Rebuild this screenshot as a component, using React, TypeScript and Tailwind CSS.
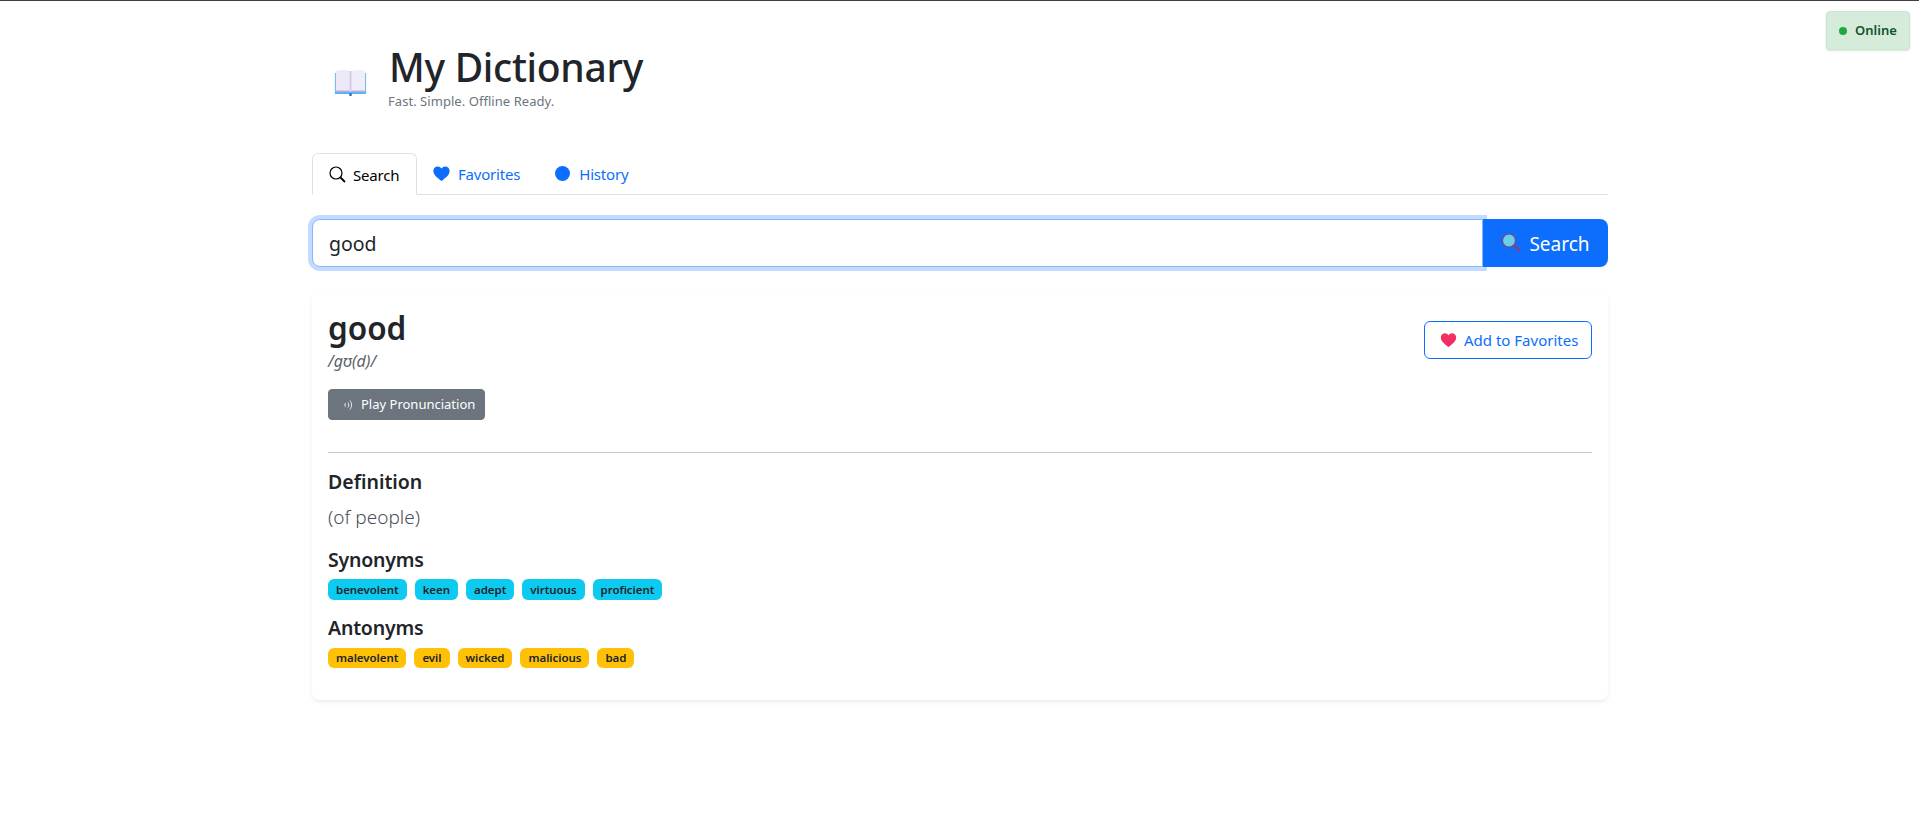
const font = { fontFamily: '"Noto Sans", sans-serif' }

function BookIcon() {
  return (
    <svg width="33" height="36" viewBox="0 0 36 36" preserveAspectRatio="none" aria-hidden="true">
      <path d="M1 8h34v21H20l-1 2h-2l-1-2H1z" fill="#5fb3ee" />
      <path d="M2 6c5-1.500 11-1.500 15.500 0v21C13 25.500 7 25.500 2 27z" fill="#ece8f8" />
      <path d="M18.500 6c4.500-1.500 10.500-1.500 15.500 0v21c-5-1.500-11-1.500-15.500 0z" fill="#f0edfb" />
      <rect x="17" y="6" width="2" height="21" fill="#cfc8e6" />
      <path d="M2 25.500h14l2 1.500 2-1.500h14V27H2z" fill="#b8b0d4" />
      <rect x="17" y="28" width="2" height="3" fill="#2f6fc4" />
    </svg>
  )
}

function MagnifierEmoji() {
  return (
    <svg width="20" height="20" viewBox="0 0 20 20" aria-hidden="true">
      <path d="M12.500 13l1.800-1.600 4.500 5a1.500 1.500 0 0 1-2.100 1.800z" fill="#8d3f78" />
      <circle cx="8" cy="7.500" r="6.600" fill="#6ad0e8" stroke="#6a4f96" strokeWidth="1.400" />
    </svg>
  )
}

function HeartIcon({ color, width, height }: { color: string; width: number; height: number }) {
  return (
    <svg width={width} height={height} viewBox="0 0 24 21" aria-hidden="true">
      <path
        d="M12 21C5 15.500 0.500 12 0.500 6.800 0.500 3 3.300 0.500 6.600 0.500c2.300 0 4.200 1 5.400 3 1.200-2 3.100-3 5.400-3 3.300 0 6.100 2.500 6.100 6.300C23.500 12 19 15.500 12 21z"
        fill={color}
      />
    </svg>
  )
}

function RedHeart() {
  return (
    <svg width="17" height="14" viewBox="0 0 24 21" aria-hidden="true">
      <defs>
        <linearGradient id="redHeartFill" x1="0" y1="0" x2="0" y2="1">
          <stop offset="0" stopColor="#f4345c" />
          <stop offset="1" stopColor="#f0266e" />
        </linearGradient>
      </defs>
      <path
        d="M12 21C5 15.500 0.500 12 0.500 6.800 0.500 3 3.300 0.500 6.600 0.500c2.300 0 4.200 1 5.400 3 1.200-2 3.100-3 5.400-3 3.300 0 6.100 2.500 6.100 6.300C23.500 12 19 15.500 12 21z"
        fill="url(#redHeartFill)"
      />
    </svg>
  )
}

function SearchGlyph() {
  return (
    <svg width="17" height="17" viewBox="0 0 17 17" fill="none" stroke="#000" aria-hidden="true">
      <circle cx="7" cy="7" r="6" strokeWidth="1.200" />
      <path d="M11.500 11.500l4.500 4.500" strokeWidth="1.800" />
    </svg>
  )
}

function SpeakerGlyph() {
  return (
    <svg width="12" height="14" viewBox="0 0 12 14" fill="none" stroke="#e8eaec" aria-hidden="true">
      <path d="M2 6l2-1.500v5L2 8z" fill="#aeb3b8" stroke="none" />
      <path d="M6 4.500c1 1.500 1 3.500 0 5" strokeWidth="1" />
      <path d="M8 2.500c2 2.500 2 6.500 0 9" strokeWidth="1" />
    </svg>
  )
}

const synonyms = ['benevolent', 'keen', 'adept', 'virtuous', 'proficient']
const antonyms = ['malevolent', 'evil', 'wicked', 'malicious', 'bad']

function WordBadges({ words, color }: { words: string[]; color: string }) {
  return (
    <div className="flex gap-2">
      {words.map((w) => (
        <span
          key={w}
          className={`px-2 rounded-[6px] text-[11.5px] font-semibold tracking-[-0.05px] text-[#212529] ${color}`}
        >
          {w}
        </span>
      ))}
    </div>
  )
}

export default function App() {
  return (
    <div className="relative min-h-[826px] bg-white border-t border-[#3f3f3f] text-[#212529]" style={font}>
      {/* Online status */}
      <div className="absolute top-[10px] right-[9px] h-[39px] w-[84px] flex items-center gap-[8px] pl-[12px] bg-[#d4ecd9] border border-[#c6e6cd] rounded-[4px] shadow-sm text-[13px] font-semibold text-[#14532d]">
        <span className="w-2 h-2 rounded-full bg-[#22a745]" />
        Online
      </div>

      <div className="w-[1296px] ml-[312px]">
        {/* Header */}
        <header className="h-[152px] flex items-start pl-[22px] pt-[42px]">
          <div className="w-[33px] mt-[22px] mr-[22px] flex-none">
            <BookIcon />
          </div>
          <div>
            <h1 className="text-[39px] leading-[48px] font-medium tracking-[-0.3px]">My Dictionary</h1>
            <p className="-ml-px text-[13px] leading-[21px] tracking-[0.05px] text-[#6c757d]">Fast. Simple. Offline Ready.</p>
          </div>
        </header>

        {/* Tabs */}
        <nav className="flex h-[42px] border-b border-[#dee2e6] text-[15px] tracking-[-0.2px]">
          <div className="h-[42px] w-[105px] flex items-center gap-[7px] pl-[16px] bg-white border border-[#dee2e6] border-b-white rounded-t-[6px] text-black">
            <SearchGlyph />
            <span className="pt-[2px]">Search</span>
          </div>
          <div className="h-[41px] flex items-center gap-[8px] px-[16px] text-[#0d6efd]">
            <HeartIcon color="#0d6efd" width={17} height={15} />
            <span className="pt-[2px]">Favorites</span>
          </div>
          <div className="h-[41px] flex items-center gap-[9px] pl-[19px] pr-[16px] text-[#0d6efd]">
            <span className="w-[15px] h-[15px] rounded-full bg-[#0d6efd]" />
            <span className="pt-[2px]">History</span>
          </div>
        </nav>

        {/* Search bar */}
        <div className="flex mt-[24px] h-[48px]">
          <div className="flex-1 flex items-center pl-[16px] pt-[2px] bg-white border border-[#86b7fe] rounded-l-[8px] shadow-[0_0_0_4px_rgba(13,110,253,0.25)] text-[19.5px]">
            good
          </div>
          <button className="relative w-[125px] flex items-center justify-center gap-[8px] bg-[#0d6efd] text-white text-[19px] rounded-r-[8px]">
            <MagnifierEmoji />
            <span className="pt-[2px]">Search</span>
          </button>
        </div>

        {/* Result card */}
        <section className="mt-[24px] h-[409px] bg-white rounded-[8px] shadow-[0_2px_4px_rgba(0,0,0,0.075)] p-[16px]">
          <div className="flex items-start justify-between">
            <div>
              <h2 className="text-[31.5px] leading-[38px] font-semibold mt-[2px]">good</h2>
              <p className="text-[16px] leading-[24px] italic text-[#5c636a] mt-[2px]">/ɡʊ(d)/</p>
              <button className="mt-[16px] h-[31px] w-[157px] flex items-center gap-[7px] pl-[13px] bg-[#6c757d] border border-[#6c757d] rounded-[4px] text-[13px] whitespace-nowrap text-white">
                <SpeakerGlyph />
                Play Pronunciation
              </button>
            </div>
            <button className="mt-[14px] h-[38px] w-[168px] flex items-center gap-[7px] pl-[15px] bg-white border border-[#0d6efd] rounded-[6px] text-[15px] whitespace-nowrap text-[#0d6efd]">
              <RedHeart />
              Add to Favorites
            </button>
          </div>

          <hr className="mt-[32px] border-t border-[#c8c9ca]" />

          <h5 className="mt-[17px] text-[19.5px] leading-[24px] font-semibold">Definition</h5>
          <p className="mt-[8px] text-[19px] leading-[30px] font-light text-[#495057]">(of people)</p>

          <h5 className="mt-[16px] text-[19.5px] leading-[24px] font-semibold tracking-[-0.2px]">Synonyms</h5>
          <div className="mt-[7px]">
            <WordBadges words={synonyms} color="h-[21px] leading-[21px] bg-[#0dcaf0]" />
          </div>

          <h5 className="mt-[16px] text-[19.5px] leading-[24px] font-semibold tracking-[-0.2px]">Antonyms</h5>
          <div className="mt-[8px]">
            <WordBadges words={antonyms} color="h-[20px] leading-[20px] bg-[#ffc107]" />
          </div>
        </section>
      </div>
    </div>
  )
}
